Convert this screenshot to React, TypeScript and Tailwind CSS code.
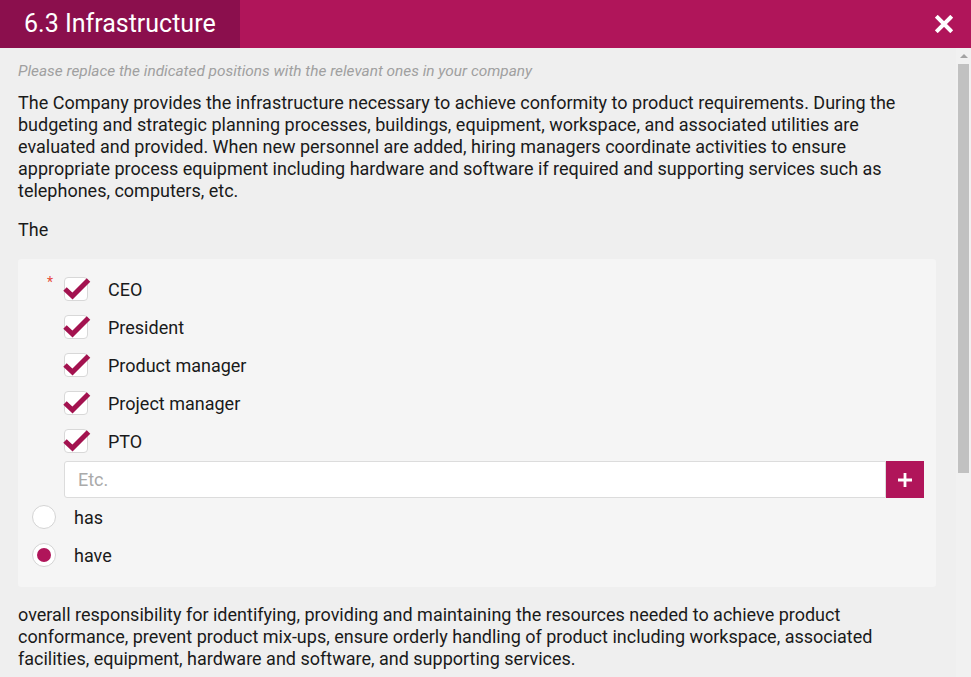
import { useState } from "react";

const roles = ["CEO", "President", "Product manager", "Project manager", "PTO"];

const Check = ({ checked }: { checked: boolean }) => (
  <span className="relative flex h-6 w-6 shrink-0 items-center justify-center rounded-[4px] border border-[#d8d8d8] bg-white">
    {checked && (
      <svg viewBox="0 0 24 24" className="absolute -left-px -top-px h-6 w-6 overflow-visible">
        <path d="M1 12 L8.5 19 L24.5 3" fill="none" stroke="#a3124f" strokeWidth="5" strokeLinecap="butt" strokeLinejoin="miter" />
      </svg>
    )}
  </span>
);

// headless browser hides native scrollbars, so draw the track/thumb ourselves
const ScrollBar = () => (
  <div className="flex w-[15px] shrink-0 flex-col bg-[#f1f1f1]">
    <div className="flex h-[16px] items-center justify-center">
      <svg viewBox="0 0 8 4" className="h-1 w-2">
        <path d="M0 4 L4 0 L8 4 Z" fill="#a3a3a3" />
      </svg>
    </div>
    <div className="ml-[2px] mr-[2px] h-[409px] bg-[#c1c1c1]" />
  </div>
);

export default function App() {
  const [checked, setChecked] = useState(roles.map(() => true));
  const [verb, setVerb] = useState("have");

  return (
    <div className="flex h-[677px] w-[971px] flex-col overflow-hidden bg-[#efefef] font-['Roboto',sans-serif] text-[#1a1a1a]">
      <div className="flex h-12 shrink-0 items-center bg-[#b0155a]">
        <div className="flex h-full w-[240px] items-center bg-[#8b0f4d] pl-6 text-[25px] text-white">6.3 Infrastructure</div>
        <div className="flex-1" />
        <button className="mr-[15px] flex h-6 w-6 items-center justify-center text-white">
          <svg viewBox="0 0 20 20" className="h-[18px] w-[18px]">
            <path d="M3 3 L17 17 M17 3 L3 17" stroke="white" strokeWidth="4.5" strokeLinecap="square" />
          </svg>
        </button>
      </div>

      <div className="flex min-h-0 flex-1">
        <div className="min-w-0 flex-1 overflow-hidden">
          <div className="pb-10 pl-[18px] pr-5 pt-[13px]">
            <p className="text-[15.4px] italic leading-5 text-[#a0a0a0]">Please replace the indicated positions with the relevant ones in your company</p>
            <p className="mt-[11px] text-[18px] leading-[22px]">
              The Company provides the infrastructure necessary to achieve conformity to product requirements. During the budgeting and strategic planning processes, buildings, equipment, workspace, and associated utilities are evaluated and provided. When new personnel are added, hiring managers coordinate activities to ensure appropriate process equipment including hardware and software if required and supporting services such as telephones, computers, etc.
            </p>
            <p className="mt-[17px] text-[18px] leading-[22px]">The</p>

            <div className="mt-[18px] rounded-[3px] bg-[#f5f5f5] pb-5 pl-[14px] pr-3 pt-[18px]">
              <div className="relative pl-8">
                <span className="absolute left-[15px] top-[-5px] text-[14px] text-[#e74c3c]">*</span>
                <div className="flex flex-col gap-[14px]">
                  {roles.map((r, i) => (
                    <label
                      key={r}
                      className="flex h-6 cursor-pointer items-center gap-5 text-[18px]"
                      onClick={() => setChecked(checked.map((c, j) => (j === i ? !c : c)))}
                    >
                      <Check checked={checked[i]} />
                      <span>{r}</span>
                    </label>
                  ))}
                </div>
                <div className="mt-2 flex h-[37px]">
                  <input
                    className="h-full flex-1 rounded-l-[3px] border border-[#dcdcdc] bg-white px-[13px] text-[18px] text-[#333] outline-none placeholder:text-[#aaa]"
                    placeholder="Etc."
                  />
                  <button className="flex h-[37px] w-[38px] items-center justify-center bg-[#b0155a] text-white">
                    <svg viewBox="0 0 16 16" className="h-4 w-4">
                      <path d="M8 1 V15 M1 8 H15" stroke="white" strokeWidth="2.8" />
                    </svg>
                  </button>
                </div>
              </div>
              <div className="mt-[7px] flex flex-col gap-[14px]">
                {["has", "have"].map((v) => (
                  <label key={v} className="flex h-6 cursor-pointer items-center gap-[18px] text-[18px]" onClick={() => setVerb(v)}>
                    <span className="flex h-6 w-6 items-center justify-center rounded-full border border-[#d4d4d4] bg-white">
                      {verb === v && <span className="h-[14px] w-[14px] rounded-full bg-[#b0155a]" />}
                    </span>
                    <span>{v}</span>
                  </label>
                ))}
              </div>
            </div>

            <p className="mt-[17px] text-[18px] leading-[22px]">
              overall responsibility for identifying, providing and maintaining the resources needed to achieve product conformance, prevent product mix-ups, ensure orderly handling of product including workspace, associated facilities, equipment, hardware and software, and supporting services.
            </p>
          </div>
        </div>
        <ScrollBar />
      </div>
    </div>
  );
}
